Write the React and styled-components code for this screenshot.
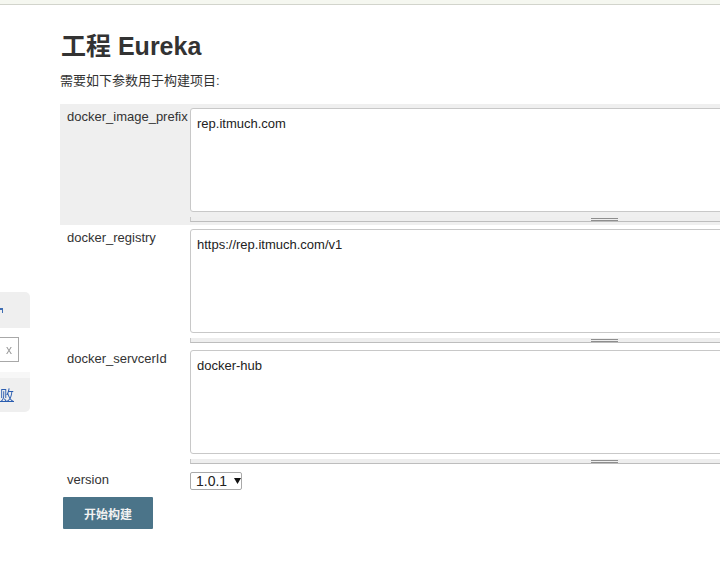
import React from "react";
import styled, { createGlobalStyle } from "styled-components";

const Global = createGlobalStyle`
  html, body { margin: 0; padding: 0; background: #fff; overflow: hidden; }
  body {
    font-family: "Liberation Sans", Arial, "Noto Sans CJK SC", sans-serif;
    color: #333;
    width: 720px;
    height: 568px;
  }
`;

const TopBar = styled.div`
  height: 4px;
  background: #f5f7f0;
  border-bottom: 1px solid #d2d4cc;
`;

const Main = styled.main`
  padding: 26px 0 0 60px;
  width: 1100px;
`;

const Title = styled.h1`
  margin: 0 0 0 1px;
  font-size: 25px;
  line-height: 30px;
  font-weight: bold;
  color: #333;
`;

const Intro = styled.p`
  margin: 12px 0 15px;
  font-size: 13px;
  line-height: 16px;
  color: #333;
`;

const ParamRow = styled.div`
  display: grid;
  grid-template-columns: 130px auto;
  padding: 4px 0 3px;
  background: ${(p) => (p.$active ? "#efefef" : "transparent")};
`;

const Label = styled.div`
  padding: 1px 0 0 7px;
  font-size: 13px;
  line-height: 15px;
  color: #333;
`;

const Field = styled.div`
  display: flex;
  flex-direction: column;
`;

const Area = styled.textarea`
  box-sizing: border-box;
  width: 827px;
  height: 104px;
  margin: 0;
  padding: 7px 6px;
  border: 1px solid #c8c8c8;
  border-radius: 3px;
  background: #fff;
  font-family: "Liberation Sans", Arial, sans-serif;
  font-size: 13px;
  line-height: 15px;
  color: #222;
  resize: none;
  outline: none;
`;

const Handle = styled.div`
  box-sizing: border-box;
  width: 827px;
  height: 5px;
  margin-top: 5px;
  background: #eee;
  border-left: 1px solid #c8c8c8;
  border-bottom: 1px solid #bdbdbd;
  display: flex;
  justify-content: center;
  align-items: flex-end;
`;

const Grip = styled.span`
  width: 27px;
  height: 1px;
  border-top: 1px solid #8e8e8e;
  border-bottom: 1px solid #8e8e8e;
`;

const SelectBox = styled.div`
  box-sizing: border-box;
  width: 52px;
  height: 18px;
  margin-top: 1px;
  padding: 0 0 0 5px;
  border: 1px solid #a9a9a9;
  border-radius: 2px;
  display: flex;
  align-items: center;
  gap: 7px;
  font-size: 14px;
  line-height: 16px;
  color: #222;
  background: #fff;
`;

const Caret = styled.svg`
  width: 7px;
  height: 6px;
  flex: none;
`;

const BuildButton = styled.button`
  margin: 4px 0 0 3px;
  width: 90px;
  height: 32px;
  border: 0;
  border-radius: 1px;
  background: #4b7489;
  color: #f2f2f2;
  font-family: "Liberation Sans", "Noto Sans CJK SC", sans-serif;
  font-weight: bold;
  font-size: 12px;
  cursor: pointer;
`;

const SideWidget = styled.aside`
  position: fixed;
  left: 0;
  top: 292px;
  width: 30px;
  height: 120px;
  background: #efefef;
  border-radius: 0 5px 5px 0;
  overflow: hidden;
  display: flex;
  flex-direction: column;
`;

const WidgetHead = styled.div`
  height: 36px;
  display: flex;
  align-items: flex-start;
  padding-top: 16px;
  box-sizing: border-box;
`;

const HeadMark = styled.span`
  width: 2px;
  height: 3px;
  border-top: 2px solid #3f6db3;
  border-right: 1px solid #3f6db3;
`;

const WidgetBody = styled.div`
  height: 44px;
  background: #fff;
  display: flex;
  justify-content: flex-end;
  padding: 9px 11px 0 0;
  box-sizing: border-box;
`;

const SearchBox = styled.div`
  box-sizing: border-box;
  width: 40px;
  height: 25px;
  border: 1px solid #a8a8a8;
  display: flex;
  justify-content: flex-end;
  align-items: center;
  padding-right: 6px;
  font-size: 12px;
  color: #9a9a9a;
  flex: none;
`;

const WidgetStrip = styled.div`
  height: 6px;
  background: #f7f7f7;
`;

const WidgetFoot = styled.div`
  flex: 1;
  display: flex;
  justify-content: flex-end;
  padding: 8px 16px 0 0;
  white-space: nowrap;
`;

const FailLink = styled.a`
  font-size: 14px;
  line-height: 16px;
  color: #2a5db0;
  text-decoration: underline;
  font-family: "Noto Sans CJK SC", sans-serif;
`;

const params = [
  { name: "docker_image_prefix", value: "rep.itmuch.com", active: true },
  { name: "docker_registry", value: "https://rep.itmuch.com/v1" },
  { name: "docker_servcerId", value: "docker-hub" },
];

export default function App() {
  return (
    <>
      <Global />
      <TopBar />
      <Main>
        <Title>工程 Eureka</Title>
        <Intro>需要如下参数用于构建项目:</Intro>
        {params.map((p) => (
          <ParamRow key={p.name} $active={p.active}>
            <Label>{p.name}</Label>
            <Field>
              <Area defaultValue={p.value} />
              <Handle>
                <Grip />
              </Handle>
            </Field>
          </ParamRow>
        ))}
        <ParamRow>
          <Label>version</Label>
          <Field>
            <SelectBox>
              1.0.1
              <Caret viewBox="0 0 7 6">
                <path d="M0 0 L7 0 L3.5 6 Z" fill="#111" />
              </Caret>
            </SelectBox>
          </Field>
        </ParamRow>
        <BuildButton>开始构建</BuildButton>
      </Main>
      <SideWidget>
        <WidgetHead>
          <HeadMark />
        </WidgetHead>
        <WidgetBody>
          <SearchBox>x</SearchBox>
        </WidgetBody>
        <WidgetStrip />
        <WidgetFoot>
          <FailLink href="#">最近失败</FailLink>
        </WidgetFoot>
      </SideWidget>
    </>
  );
}
